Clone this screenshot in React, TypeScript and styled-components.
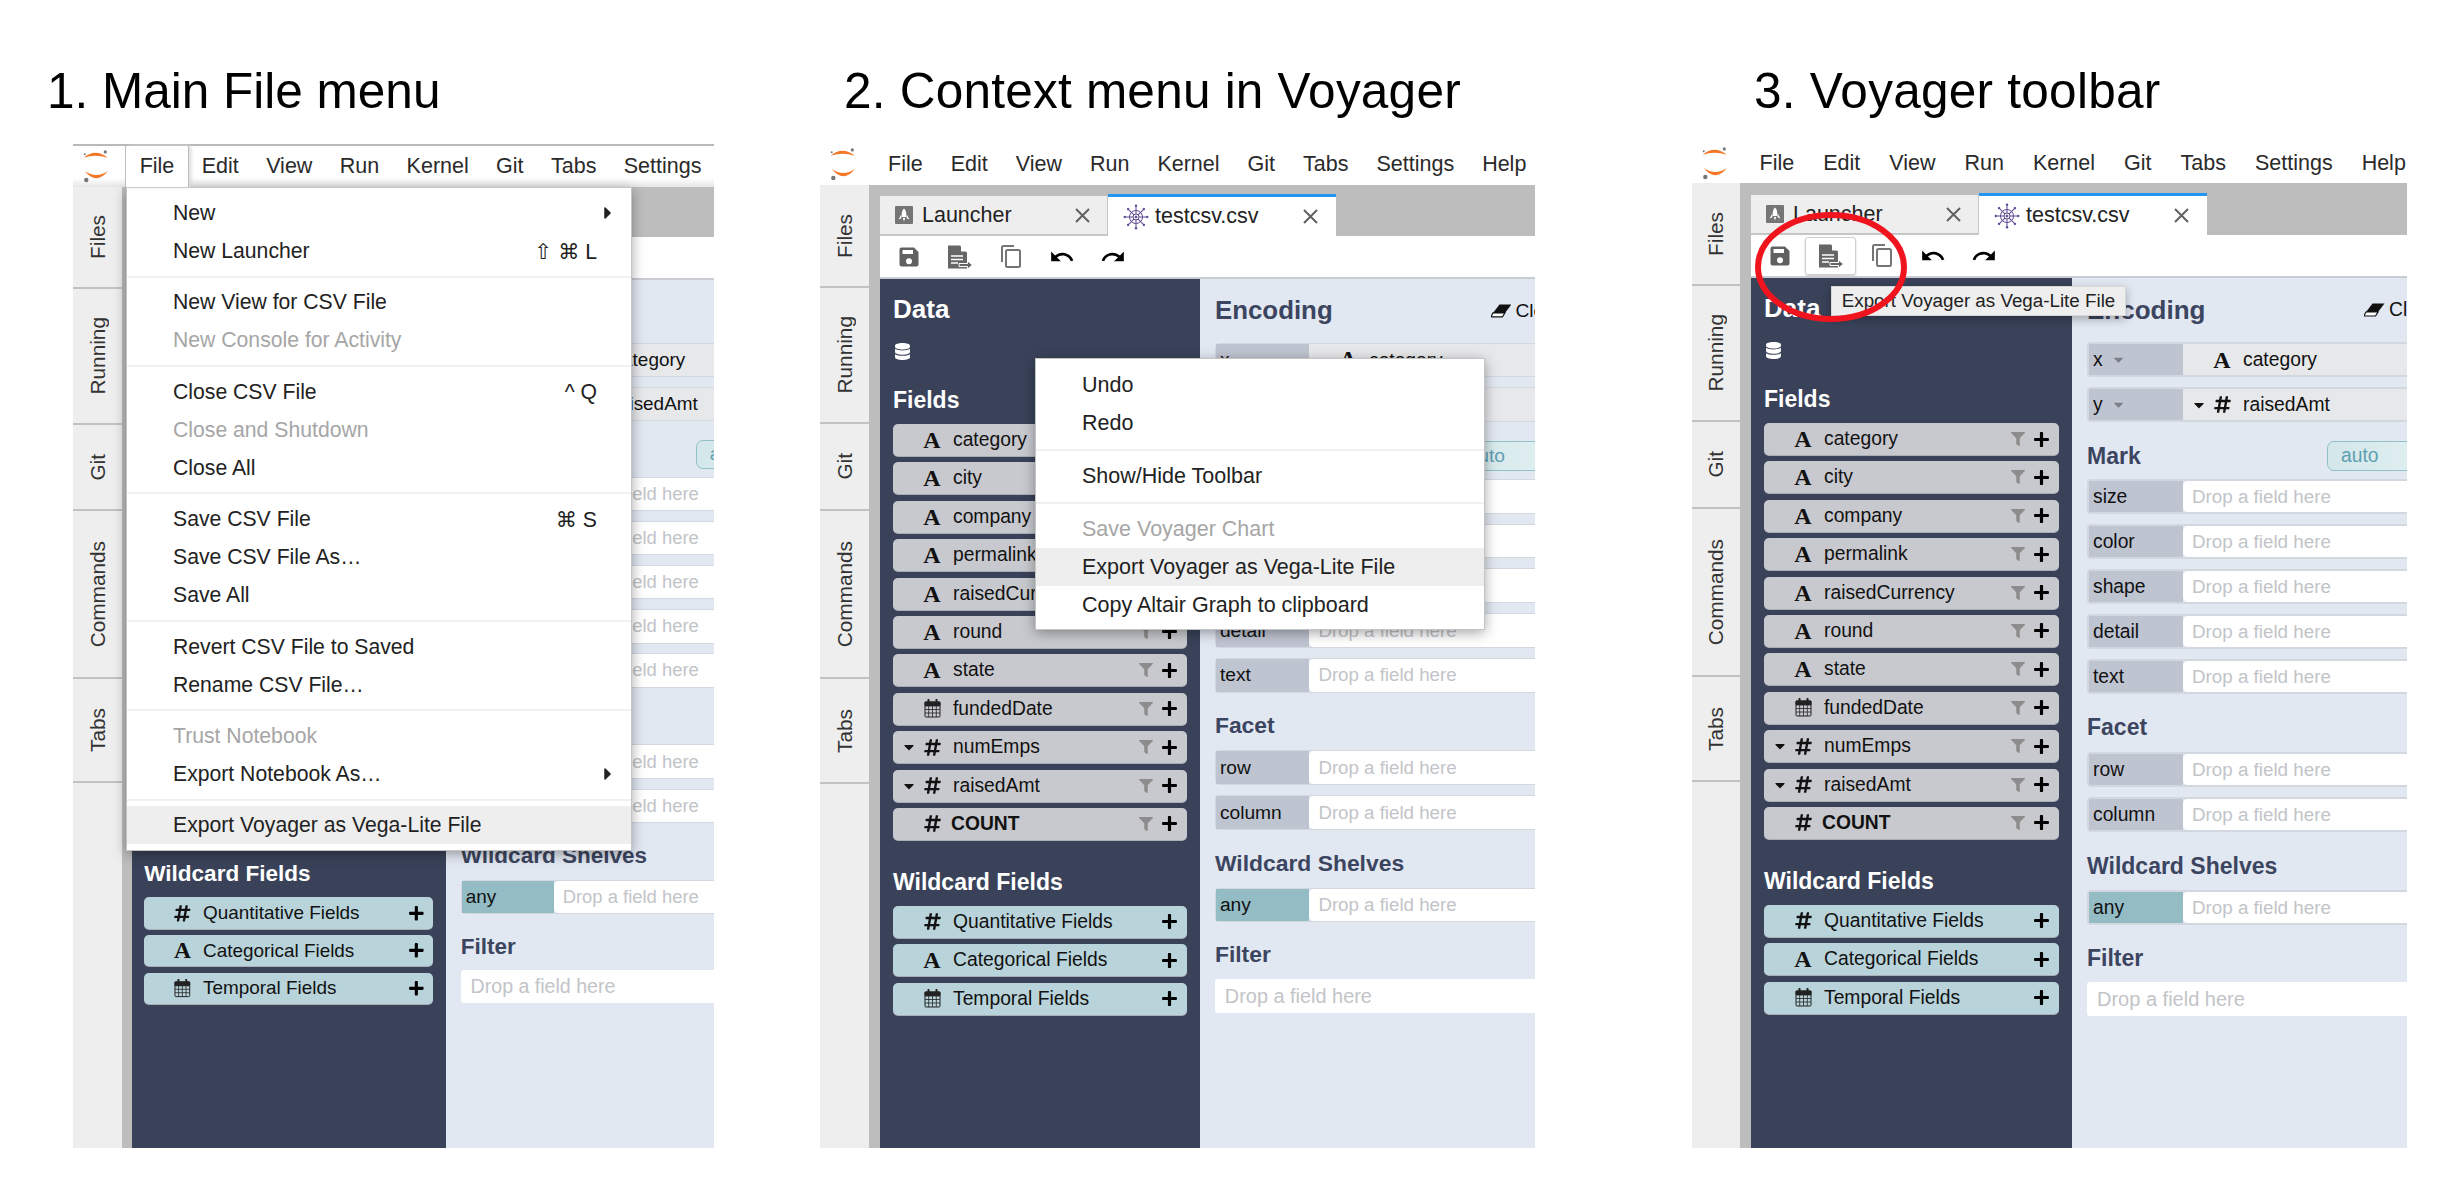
import React from "react";
import styled, { createGlobalStyle } from "styled-components";
import { FaCaretDown, FaCaretRight, FaDatabase, FaFilter, FaHashtag, FaPlus } from "react-icons/fa";
import { MdRedo, MdUndo } from "react-icons/md";

const menuNames = ["File", "Edit", "View", "Run", "Kernel", "Git", "Tabs", "Settings", "Help"];

const sideTabs = [
  { name: "Files", height: 103 },
  { name: "Running", height: 136 },
  { name: "Git", height: 87 },
  { name: "Commands", height: 168 },
  { name: "Tabs", height: 105 },
];

type FieldKind = "text" | "date" | "number";

const fields: { name: string; kind: FieldKind; caret?: boolean; bold?: boolean }[] = [
  { name: "category", kind: "text" },
  { name: "city", kind: "text" },
  { name: "company", kind: "text" },
  { name: "permalink", kind: "text" },
  { name: "raisedCurrency", kind: "text" },
  { name: "round", kind: "text" },
  { name: "state", kind: "text" },
  { name: "fundedDate", kind: "date" },
  { name: "numEmps", kind: "number", caret: true },
  { name: "raisedAmt", kind: "number", caret: true },
  { name: "COUNT", kind: "number", bold: true },
];

const wildcards: { name: string; kind: FieldKind }[] = [
  { name: "Quantitative Fields", kind: "number" },
  { name: "Categorical Fields", kind: "text" },
  { name: "Temporal Fields", kind: "date" },
];

type MenuEntry = { label?: string; keys?: string; off?: boolean; sub?: boolean; hot?: boolean };

const fileMenu: MenuEntry[] = [
  { label: "New", sub: true },
  { label: "New Launcher", keys: "⇧ ⌘ L" },
  {},
  { label: "New View for CSV File" },
  { label: "New Console for Activity", off: true },
  {},
  { label: "Close CSV File", keys: "^ Q" },
  { label: "Close and Shutdown", off: true },
  { label: "Close All" },
  {},
  { label: "Save CSV File", keys: "⌘ S" },
  { label: "Save CSV File As…" },
  { label: "Save All" },
  {},
  { label: "Revert CSV File to Saved" },
  { label: "Rename CSV File…" },
  {},
  { label: "Trust Notebook", off: true },
  { label: "Export Notebook As…", sub: true },
  {},
  { label: "Export Voyager as Vega-Lite File", hot: true },
];

const contextMenu: MenuEntry[] = [
  { label: "Undo" },
  { label: "Redo" },
  {},
  { label: "Show/Hide Toolbar" },
  {},
  { label: "Save Voyager Chart", off: true },
  { label: "Export Voyager as Vega-Lite File", hot: true },
  { label: "Copy Altair Graph to clipboard" },
];

const GlobalStyle = createGlobalStyle`
  html, body {
    margin: 0;
    background: #fff;
  }
  body {
    font-family: "Liberation Sans", "DejaVu Sans", sans-serif;
    color: #1c1c1c;
  }
`;

const Page = styled.div`
  width: 2456px;
  height: 1180px;
  padding-left: 73px;
  box-sizing: border-box;
  display: flex;
  overflow: hidden;
`;

const Column = styled.section<{ $width: number; $gap: number }>`
  width: ${(p) => p.$width}px;
  margin-left: ${(p) => p.$gap}px;
  flex: none;
`;

const Title = styled.h1<{ $shift: number; $track: number }>`
  height: 144px;
  box-sizing: border-box;
  margin: 0 0 0 ${(p) => p.$shift}px;
  padding-top: 63px;
  font-size: 49.5px;
  line-height: 56px;
  font-weight: 400;
  letter-spacing: ${(p) => p.$track}px;
  color: #000;
  white-space: nowrap;
`;

const Screen = styled.div`
  position: relative;
  height: 1004px;
  display: flex;
  flex-direction: column;
  overflow: hidden;
`;

const TopBar = styled.div<{ $height: number; $lined?: boolean }>`
  height: ${(p) => p.$height}px;
  flex: none;
  box-sizing: border-box;
  display: flex;
  align-items: stretch;
  border-top: ${(p) => (p.$lined ? "2px solid #b9b9b9" : "none")};
  background: ${(p) => (p.$lined ? "linear-gradient(#fff 78%, #e6e6e6)" : "#fff")};
`;

const LogoCell = styled.div<{ $width: number }>`
  width: ${(p) => p.$width}px;
  flex: none;
  display: flex;
  align-items: center;
  padding-left: 9px;
  box-sizing: border-box;
`;

const MenuName = styled.div<{ $open?: boolean; $pad: number }>`
  padding: 0 ${(p) => p.$pad}px;
  display: flex;
  align-items: center;
  font-size: 21.5px;
  color: #2a2a2a;
  background: ${(p) => (p.$open ? "#fff" : "transparent")};
  box-shadow: ${(p) => (p.$open ? "-1px 0 0 #bdbdbd, 1px 0 0 #bdbdbd, 3px 0 4px #d8d8d8" : "none")};
  position: relative;
  z-index: ${(p) => (p.$open ? 3 : 0)};
  flex: none;
`;

const Main = styled.div`
  flex: 1;
  min-height: 0;
  display: flex;
`;

const Sidebar = styled.div<{ $width: number }>`
  width: ${(p) => p.$width}px;
  flex: none;
  background: #eeeeee;
`;

const SideTab = styled.div<{ $height: number }>`
  height: ${(p) => p.$height}px;
  box-sizing: border-box;
  border-bottom: 2px solid #c2c2c2;
  display: flex;
  align-items: center;
  justify-content: center;
`;

const SideLabel = styled.span`
  writing-mode: vertical-rl;
  transform: rotate(180deg);
  font-size: 20.8px;
  color: #333;
`;

const Dock = styled.div<{ $gutter: number }>`
  flex: 1;
  min-width: 0;
  display: flex;
  flex-direction: column;
  background: #bdbdbd;
  padding-left: ${(p) => p.$gutter}px;
`;

const TabBar = styled.div<{ $height: number }>`
  height: ${(p) => p.$height}px;
  flex: none;
  display: flex;
  align-items: flex-end;
`;

const DocTab = styled.div<{ $active?: boolean }>`
  width: 228px;
  height: ${(p) => (p.$active ? 42 : 40)}px;
  box-sizing: border-box;
  display: flex;
  align-items: center;
  gap: ${(p) => (p.$active ? 6 : 9)}px;
  padding: 0 18px 0 15px;
  font-size: 21.5px;
  color: #222;
  background: ${(p) => (p.$active ? "#fff" : "#eeeeee")};
  border-top: ${(p) => (p.$active ? "3px solid #2196f3" : "none")};
  border-bottom: ${(p) => (p.$active ? "none" : "2px solid #c6c6c6")};
  box-shadow: ${(p) => (p.$active ? "none" : "inset -1px 0 0 #c6c6c6")};
`;

const TabClose = styled.svg`
  margin-left: auto;
  width: 15px;
  height: 15px;
  stroke: #616161;
  stroke-width: 2;
  fill: none;
`;

const Toolbar = styled.div`
  height: 43px;
  flex: none;
  box-sizing: border-box;
  display: flex;
  align-items: center;
  padding-left: 3px;
  background: #fff;
  border-bottom: 2px solid #c9ccd3;
`;

const ToolButton = styled.div<{ $pressed?: boolean }>`
  width: 51px;
  height: 38px;
  box-sizing: border-box;
  display: flex;
  align-items: center;
  justify-content: center;
  color: #000;
  border-radius: 3px;
  border: 1px solid ${(p) => (p.$pressed ? "#cfcfcf" : "transparent")};
  box-shadow: ${(p) => (p.$pressed ? "0 1px 2px #c8c8c8" : "none")};
`;

const Body = styled.div<{ $zoom: number }>`
  flex: 1;
  min-height: 0;
  display: flex;
  zoom: ${(p) => p.$zoom};
`;

const DataPane = styled.div<{ $width: number }>`
  width: ${(p) => p.$width}px;
  flex: none;
  box-sizing: border-box;
  padding: 15px 13px 0;
  background: #394259;
  color: #fff;
`;

const DataTitle = styled.h2`
  margin: 0;
  font-size: 26px;
  line-height: 30px;
  font-weight: 700;
  color: #fff;
`;

const DbIcon = styled.div`
  margin: 19px 0 0 1px;
  height: 19px;
  display: flex;
`;

const PaneTitle = styled.h3<{ $top: number }>`
  margin: ${(p) => p.$top}px 0 0;
  font-size: 23px;
  line-height: 28px;
  font-weight: 700;
  color: #fff;
`;

const PillList = styled.div<{ $top: number }>`
  margin-top: ${(p) => p.$top}px;
  display: flex;
  flex-direction: column;
  gap: 6.4px;
`;

const Pill = styled.div<{ $tone: "field" | "wild" | "placed" }>`
  height: 32px;
  flex: none;
  box-sizing: border-box;
  display: flex;
  align-items: center;
  padding: 0 9px;
  font-size: 19.3px;
  color: #111;
  border-radius: 5px;
  background: ${(p) => ({ field: "#c8c9ce", wild: "#b9d3da", placed: "#e7e8ea" })[p.$tone]};
  box-shadow: 0 1px 0 ${(p) => (p.$tone === "placed" ? "#d0d3da" : "#a9adb8")};
`;

const CaretSlot = styled.span`
  width: 14px;
  flex: none;
  display: flex;
  justify-content: center;
  color: #111;
`;

const TypeSlot = styled.span`
  width: 22px;
  margin-left: 5px;
  flex: none;
  display: flex;
  justify-content: center;
  align-items: center;
  color: #111;
`;

const SerifA = styled.span`
  font-family: "Liberation Serif", serif;
  font-weight: 700;
  font-size: 24px;
  line-height: 24px;
  color: #111;
`;

const PillName = styled.span<{ $bold?: boolean; $tight?: boolean }>`
  margin-left: ${(p) => (p.$tight ? 8 : 10)}px;
  font-weight: ${(p) => (p.$bold ? 700 : 400)};
  white-space: nowrap;
`;

const PillActions = styled.span`
  margin-left: auto;
  display: flex;
  align-items: center;
  gap: 8px;
  color: #000;
`;

const ShelfPane = styled.div<{ $zoom: number }>`
  flex: 1;
  min-width: 0;
  box-sizing: border-box;
  padding: 17px 0 0 15px;
  background: #e2e8f2;
  overflow: hidden;
  zoom: ${(p) => p.$zoom};
`;

const ShelfHeader = styled.div<{ $top?: number; $first?: number }>`
  margin-top: ${(p) => p.$top ?? 0}px;
  display: grid;
  grid-template-columns: ${(p) => p.$first ?? 240}px 220px;
  align-items: center;
`;

const EncodingTitle = styled.h2`
  margin: 0;
  font-size: 26px;
  line-height: 30px;
  font-weight: 700;
  color: #3c4560;
`;

const ShelfTitle = styled.h3<{ $top?: number }>`
  margin: ${(p) => p.$top ?? 0}px 0 0;
  font-size: 23px;
  line-height: 30px;
  font-weight: 700;
  color: #3c4560;
  white-space: nowrap;
`;

const ClearLink = styled.span`
  display: flex;
  align-items: center;
  gap: 4px;
  font-size: 19.3px;
  color: #111;
`;

const AutoButton = styled.div`
  height: 30px;
  box-sizing: border-box;
  padding-left: 13px;
  display: flex;
  align-items: center;
  font-size: 19.3px;
  color: #5f9fb1;
  border: 1.5px solid #91c0c6;
  border-radius: 7px 0 0 7px;
  background: linear-gradient(90deg, #d3e7ea, #e6f2f3 60%, #cfe4e6);
`;

const ShelfStack = styled.div<{ $top: number }>`
  margin-top: ${(p) => p.$top}px;
  display: flex;
  flex-direction: column;
  gap: 10px;
`;

const ShelfRow = styled.div`
  width: 460px;
  height: 35px;
  box-sizing: border-box;
  display: flex;
  align-items: stretch;
  border: 2px solid #d3d7df;
  border-radius: 4px;
`;

const ShelfLabel = styled.div<{ $any?: boolean }>`
  width: 94px;
  flex: none;
  box-sizing: border-box;
  padding-left: 4px;
  display: flex;
  align-items: center;
  gap: 8px;
  font-size: 19.3px;
  color: #111;
  background: ${(p) => (p.$any ? "#93bcc5" : "#bfc4d1")};
`;

const DropSlot = styled.div`
  flex: 1;
  box-sizing: border-box;
  padding-left: 9px;
  display: flex;
  align-items: center;
  font-size: 18.8px;
  color: #c2c4c8;
  background: #fff;
  border-radius: 5px 0 0 5px;
`;

const PlacedSlot = styled.div`
  flex: 1;
  display: flex;
  & > div {
    flex: 1;
    height: auto;
    border-radius: 5px 0 0 5px;
    box-shadow: none;
  }
`;

const FilterInput = styled.div`
  margin-top: 9px;
  width: 460px;
  height: 34px;
  box-sizing: border-box;
  padding-left: 10px;
  display: flex;
  align-items: center;
  font-size: 20px;
  color: #c2c4c8;
  background: #fff;
  border-radius: 3px;
`;

const Popup = styled.div<{ $left: number; $top: number; $width: number; $height: number; $pad: number; $size: number }>`
  position: absolute;
  left: ${(p) => p.$left}px;
  top: ${(p) => p.$top}px;
  width: ${(p) => p.$width}px;
  height: ${(p) => p.$height}px;
  box-sizing: border-box;
  padding-top: ${(p) => p.$pad}px;
  font-size: ${(p) => p.$size}px;
  background: #fff;
  border: 1px solid #c4c4c4;
  box-shadow: 0 3px 12px rgba(0, 0, 0, 0.35);
  z-index: 2;
`;

const PopupRow = styled.div<{ $hot?: boolean; $off?: boolean; $inset: number }>`
  height: 38px;
  box-sizing: border-box;
  padding-left: ${(p) => p.$inset}px;
  display: flex;
  align-items: center;
  white-space: nowrap;
  color: ${(p) => (p.$off ? "#a6a6a6" : "#222")};
  background: ${(p) => (p.$hot ? "#eeeeee" : "transparent")};
`;

const PopupKeys = styled.span`
  margin-left: auto;
  color: #222;
`;

const PopupEnd = styled.span`
  width: 34px;
  flex: none;
  display: flex;
  justify-content: flex-end;
  padding-right: 13px;
  box-sizing: border-box;
  margin-left: auto;
`;

const PopupKeysEnd = styled.span`
  width: 34px;
  flex: none;
`;

const PopupRule = styled.div<{ $gap: number }>`
  height: 2px;
  margin: ${(p) => p.$gap}px 0;
  background: #f0f0f0;
`;

const Tooltip = styled.div`
  position: absolute;
  left: 139px;
  top: 142px;
  width: 295px;
  height: 30px;
  box-sizing: border-box;
  display: flex;
  align-items: center;
  justify-content: center;
  font-size: 18.8px;
  white-space: nowrap;
  color: #222;
  background: #eeeeee;
  border: 1px solid #d8d8d8;
  box-shadow: 0 3px 10px rgba(0, 0, 0, 0.3);
  z-index: 2;
`;

const RedCircle = styled.svg`
  position: absolute;
  left: 62px;
  top: 67px;
  width: 154px;
  height: 112px;
  z-index: 3;
`;

const JupyterLogo = () => (
  <svg width="30" height="34" viewBox="0 0 30 34">
    <path d="M1.7 7.7Q13.3-2.3 25.7 7.7Q13.3 3.7 1.7 7.7Z" fill="#f37726" />
    <path d="M2.7 21Q14.3 35.6 26 21Q14.3 29 2.7 21Z" fill="#f37726" />
    <circle cx="2.7" cy="4.3" r="1" fill="#767677" />
    <circle cx="23.3" cy="1.9" r="1.6" fill="#767677" />
    <circle cx="4.3" cy="30" r="2.2" fill="#767677" />
  </svg>
);

const RocketIcon = () => (
  <svg width="18" height="18" viewBox="0 0 18 18">
    <rect width="18" height="18" rx="1" fill="#757575" />
    <path d="M9 2.5C11 4.5 11.5 7 11.3 11H6.7C6.5 7 7 4.5 9 2.5Z" fill="#fff" />
    <path d="M6.3 8.5L3.6 13.6L6.4 12.2ZM11.7 8.5L14.4 13.6L11.6 12.2ZM7.8 12H10.2L9 15.5Z" fill="#fff" />
  </svg>
);

const WheelIcon = () => (
  <svg width="26" height="26" viewBox="0 0 26 26" fill="none" stroke="#5d4a94" strokeWidth="1">
    <circle cx="13" cy="13" r="6.5" />
    <circle cx="13" cy="13" r="3" />
    <circle cx="13" cy="13" r="1" fill="#5d4a94" />
    {[0, 45, 90, 135, 180, 225, 270, 315].map((deg) => (
      <g key={deg} transform={`rotate(${deg} 13 13)`}>
        <line x1="13" y1="10" x2="13" y2="2.5" />
        <circle cx="13" cy="1.8" r="1.2" fill="#5d4a94" stroke="none" />
      </g>
    ))}
  </svg>
);

const SaveIcon = () => (
  <svg width="20" height="20" viewBox="0 0 20 20">
    <path
      fillRule="evenodd"
      fill="#616161"
      d="M2.5 0.5H15L19.5 5V17.5A2 2 0 0 1 17.5 19.5H2.5A2 2 0 0 1 0.5 17.5V2.5A2 2 0 0 1 2.5 0.5ZM3.5 3V7H14V3ZM10 11.2A3 3 0 1 0 10 17.2A3 3 0 1 0 10 11.2Z"
    />
  </svg>
);

const ExportDocIcon = () => (
  <svg width="26" height="24" viewBox="0 0 26 24">
    <path d="M1 0.5H13L20 7.5V23.5H1Z" fill="#666" />
    <path d="M14 0.5L20 6.5H14Z" fill="#fff" />
    <path d="M4 11H16M4 14.5H16M4 18H11" stroke="#fff" strokeWidth="1.5" />
    <path d="M12 18.5H20.5V16L25.5 20L20.5 24V21.5H12Z" fill="#666" stroke="#fff" strokeWidth="1" />
  </svg>
);

const CopyIcon = () => (
  <svg width="21" height="23" viewBox="0 0 21 23" fill="none" stroke="#757575" strokeWidth="2">
    <path d="M2 17V2.5A1.5 1.5 0 0 1 3.5 1H14" />
    <rect x="6" y="5" width="14" height="17" rx="1.5" />
  </svg>
);

const CalendarIcon = () => (
  <svg width="17" height="19" viewBox="0 0 17 19" fill="none" stroke="#222" strokeWidth="1">
    <rect x="1" y="3" width="15" height="15" rx="1" />
    <path d="M1 7H16M1 10.5H16M1 14H16M4.7 7V18M8.5 7V18M12.3 7V18" strokeWidth="0.8" />
    <path d="M1 3H16V6.5H1Z" fill="#222" />
    <path d="M4.5 0.8V4M12.5 0.8V4" strokeWidth="2" strokeLinecap="round" />
  </svg>
);

const EraserIcon = () => (
  <svg width="21" height="14" viewBox="0 0 21 14">
    <path d="M8.5 0.5H20.5L14 9H2Z" fill="#111" />
    <path d="M2 9H14L11.5 13H1C0.2 13 0.2 12.5 0.5 11.8Z" fill="#fff" stroke="#111" strokeWidth="1.2" />
  </svg>
);

const KindIcon = ({ kind }: { kind: FieldKind }) => {
  if (kind === "text") return <SerifA>A</SerifA>;
  if (kind === "number") return <FaHashtag size={19} />;
  return <CalendarIcon />;
};

const FieldPill = ({
  name,
  kind,
  caret,
  bold,
  tone,
  filter,
  plus,
}: {
  name: string;
  kind: FieldKind;
  caret?: boolean;
  bold?: boolean;
  tone: "field" | "wild" | "placed";
  filter?: boolean;
  plus?: boolean;
}) => (
  <Pill $tone={tone}>
    <CaretSlot>{caret && <FaCaretDown size={16} />}</CaretSlot>
    <TypeSlot>
      <KindIcon kind={kind} />
    </TypeSlot>
    <PillName $bold={bold} $tight={bold}>
      {name}
    </PillName>
    {plus && (
      <PillActions>
        {filter && <FaFilter size={14} color="#8c8c8c" />}
        <FaPlus size={17} />
      </PillActions>
    )}
  </Pill>
);

const DropRow = ({ label, any }: { label: string; any?: boolean }) => (
  <ShelfRow>
    <ShelfLabel $any={any}>{label}</ShelfLabel>
    <DropSlot>Drop a field here</DropSlot>
  </ShelfRow>
);

const PlacedRow = ({ label, children }: { label: string; children: React.ReactNode }) => (
  <ShelfRow>
    <ShelfLabel>
      {label}
      <FaCaretDown size={15} color="#7c7f88" />
    </ShelfLabel>
    <PlacedSlot>{children}</PlacedSlot>
  </ShelfRow>
);

const VoyagerBody = ({
  zoom,
  shelfZoom,
  dataWidth,
  wildTop,
}: {
  zoom: number;
  shelfZoom: number;
  dataWidth: number;
  wildTop: number;
}) => (
  <Body $zoom={zoom}>
    <DataPane $width={dataWidth}>
      <DataTitle>Data</DataTitle>
      <DbIcon>
        <FaDatabase size={17} />
      </DbIcon>
      <PaneTitle $top={24}>Fields</PaneTitle>
      <PillList $top={10}>
        {fields.map((f) => (
          <FieldPill key={f.name} {...f} tone="field" filter plus />
        ))}
      </PillList>
      <PaneTitle $top={wildTop}>Wildcard Fields</PaneTitle>
      <PillList $top={10}>
        {wildcards.map((f) => (
          <FieldPill key={f.name} {...f} tone="wild" plus />
        ))}
      </PillList>
    </DataPane>
    <ShelfPane $zoom={shelfZoom}>
      <ShelfHeader $first={277}>
        <EncodingTitle>Encoding</EncodingTitle>
        <ClearLink>
          <EraserIcon />
          Clear
        </ClearLink>
      </ShelfHeader>
      <ShelfStack $top={17}>
        <PlacedRow label="x">
          <FieldPill name="category" kind="text" tone="placed" />
        </PlacedRow>
        <PlacedRow label="y">
          <FieldPill name="raisedAmt" kind="number" caret tone="placed" />
        </PlacedRow>
      </ShelfStack>
      <ShelfHeader $top={19}>
        <ShelfTitle>Mark</ShelfTitle>
        <AutoButton>auto</AutoButton>
      </ShelfHeader>
      <ShelfStack $top={8}>
        {["size", "color", "shape", "detail", "text"].map((s) => (
          <DropRow key={s} label={s} />
        ))}
      </ShelfStack>
      <ShelfTitle $top={18}>Facet</ShelfTitle>
      <ShelfStack $top={10}>
        <DropRow label="row" />
        <DropRow label="column" />
      </ShelfStack>
      <ShelfTitle $top={19}>Wildcard Shelves</ShelfTitle>
      <ShelfStack $top={9}>
        <DropRow label="any" any />
      </ShelfStack>
      <ShelfTitle $top={18}>Filter</ShelfTitle>
      <FilterInput>Drop a field here</FilterInput>
    </ShelfPane>
  </Body>
);

const PopupMenu = ({
  items,
  inset,
  gap,
  size,
  ...box
}: {
  items: MenuEntry[];
  inset: number;
  gap: number;
  size: number;
  left: number;
  top: number;
  width: number;
  height: number;
  pad: number;
}) => (
  <Popup $left={box.left} $top={box.top} $width={box.width} $height={box.height} $pad={box.pad} $size={size}>
    {items.map((item, i) =>
      item.label ? (
        <PopupRow key={i} $hot={item.hot} $off={item.off} $inset={inset}>
          {item.label}
          {item.keys && <PopupKeys>{item.keys}</PopupKeys>}
          {item.keys && <PopupKeysEnd />}
          {item.sub && (
            <PopupEnd>
              <FaCaretRight size={20} />
            </PopupEnd>
          )}
        </PopupRow>
      ) : (
        <PopupRule key={i} $gap={gap} />
      ),
    )}
  </Popup>
);

const Frame = ({
  barHeight,
  tabBarHeight,
  sideWidth,
  gutter,
  logoWidth,
  menuPad,
  zoom = 1,
  shelfZoom = 1,
  dataWidth = 321,
  wildTop = 28,
  sideScale = 1,
  firstTab = false,
  pressed = false,
  children,
}: {
  barHeight: number;
  tabBarHeight: number;
  sideWidth: number;
  gutter: number;
  logoWidth: number;
  menuPad: number;
  zoom?: number;
  shelfZoom?: number;
  dataWidth?: number;
  wildTop?: number;
  sideScale?: number;
  firstTab?: boolean;
  pressed?: boolean;
  children?: React.ReactNode;
}) => (
  <Screen>
    <TopBar $height={barHeight} $lined={firstTab}>
      <LogoCell $width={logoWidth}>
        <JupyterLogo />
      </LogoCell>
      {menuNames.map((name) => (
        <MenuName key={name} $pad={menuPad} $open={firstTab && name === "File"}>
          {name}
        </MenuName>
      ))}
    </TopBar>
    <Main>
      <Sidebar $width={sideWidth}>
        {sideTabs.map((t) => (
          <SideTab key={t.name} $height={t.height * sideScale}>
            <SideLabel>{t.name}</SideLabel>
          </SideTab>
        ))}
      </Sidebar>
      <Dock $gutter={gutter}>
        <TabBar $height={tabBarHeight}>
          <DocTab>
            <RocketIcon />
            Launcher
            <TabClose viewBox="0 0 15 15">
              <path d="M1 1L14 14M14 1L1 14" />
            </TabClose>
          </DocTab>
          <DocTab $active>
            <WheelIcon />
            testcsv.csv
            <TabClose viewBox="0 0 15 15">
              <path d="M1 1L14 14M14 1L1 14" />
            </TabClose>
          </DocTab>
        </TabBar>
        <Toolbar>
          <ToolButton>
            <SaveIcon />
          </ToolButton>
          <ToolButton $pressed={pressed}>
            <ExportDocIcon />
          </ToolButton>
          <ToolButton>
            <CopyIcon />
          </ToolButton>
          <ToolButton>
            <MdUndo size={26} />
          </ToolButton>
          <ToolButton>
            <MdRedo size={26} />
          </ToolButton>
        </Toolbar>
        <VoyagerBody zoom={zoom} shelfZoom={shelfZoom} dataWidth={dataWidth} wildTop={wildTop} />
      </Dock>
    </Main>
    {children}
  </Screen>
);

export default function App() {
  return (
    <>
      <GlobalStyle />
      <Page>
        <Column $width={641} $gap={0}>
          <Title $shift={-26} $track={0}>
            1. Main File menu
          </Title>
          <Frame
            barHeight={43}
            tabBarHeight={50}
            sideWidth={49}
            gutter={9.5}
            logoWidth={53}
            menuPad={13.7}
            zoom={0.98}
            wildTop={31}
            sideScale={0.995}
            firstTab
          >
            <PopupMenu items={fileMenu} inset={46} gap={5.7} size={21.2} left={53} top={43} width={506} height={664} pad={6} />
          </Frame>
        </Column>
        <Column $width={715} $gap={106}>
          <Title $shift={24} $track={0.23}>
            2. Context menu in Voyager
          </Title>
          <Frame
            barHeight={41}
            tabBarHeight={51}
            sideWidth={49}
            gutter={11}
            logoWidth={54}
            menuPad={14}
            shelfZoom={0.995}
            dataWidth={320}
          >
            <PopupMenu items={contextMenu} inset={46} gap={6.5} size={21.5} left={215} top={214} width={450} height={272} pad={7} />
          </Frame>
        </Column>
        <Column $width={715} $gap={157}>
          <Title $shift={62} $track={0.26}>
            3. Voyager toolbar
          </Title>
          <Frame barHeight={39} tabBarHeight={52} sideWidth={48} gutter={11} logoWidth={53} menuPad={14.5} pressed>
            <Tooltip>Export Voyager as Vega-Lite File</Tooltip>
            <RedCircle viewBox="0 0 154 112">
              <ellipse cx="77" cy="56" rx="73" ry="52" fill="none" stroke="#f0141e" strokeWidth="6" />
            </RedCircle>
          </Frame>
        </Column>
      </Page>
    </>
  );
}
